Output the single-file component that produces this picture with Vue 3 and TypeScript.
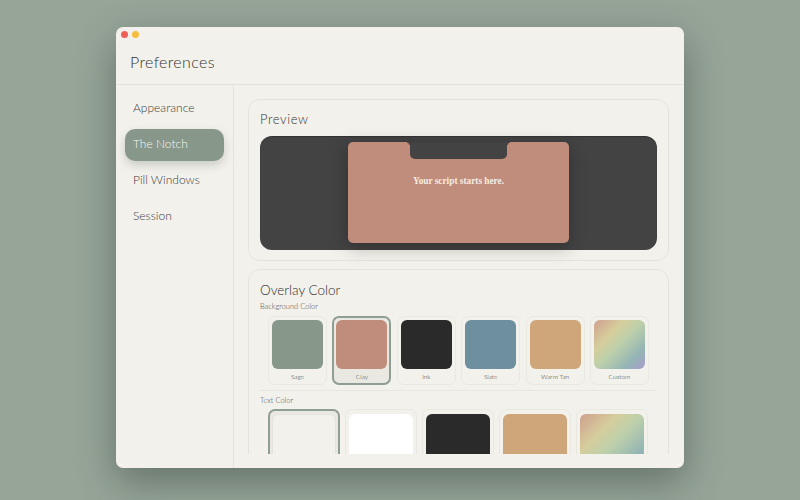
<script setup lang="ts">
interface Swatch {
  name: string;
  kind: string;
  selected?: boolean;
}

const navItems = ['Appearance', 'The Notch', 'Pill Windows', 'Session'];

const backgrounds: Swatch[] = [
  { name: 'Sage', kind: 'sage' },
  { name: 'Clay', kind: 'clay', selected: true },
  { name: 'Ink', kind: 'ink' },
  { name: 'Slate', kind: 'slate' },
  { name: 'Warm Tan', kind: 'tan' },
  { name: 'Custom', kind: 'custom' }
];

// names of this row sit below the fold
const textColors: Swatch[] = [
  { name: 'cream', kind: 'cream', selected: true },
  { name: 'white', kind: 'white' },
  { name: 'ink', kind: 'ink' },
  { name: 'tan', kind: 'tan' },
  { name: 'custom', kind: 'custom' }
];
</script>

<template>
  <div class="desktop">
    <div class="window">
      <div class="lights">
        <span class="light red"></span>
        <span class="light yellow"></span>
      </div>
      <header class="header">
        <h1>Preferences</h1>
      </header>
      <div class="body">
        <nav class="sidebar">
          <div
            v-for="item in navItems"
            :key="item"
            :class="['nav-item', { active: item === 'The Notch' }]"
          >
            {{ item }}
          </div>
        </nav>
        <main class="main">
          <div class="scroll">
            <section class="card preview-card">
              <h2 class="preview-title">Preview</h2>
              <div class="screen">
                <div class="overlay">
                  <div class="notch"></div>
                  <p class="script-text">Your script starts here.</p>
                </div>
              </div>
            </section>
            <section class="card">
              <h2 class="overlay-title">Overlay Color</h2>
              <div class="field-label">Background Color</div>
              <div class="swatches">
                <div
                  v-for="s in backgrounds"
                  :key="s.name"
                  :class="['swatch', { selected: s.selected }]"
                >
                  <div :class="['chip', s.kind]"></div>
                  <div class="swatch-name">{{ s.name }}</div>
                </div>
              </div>
              <div class="divider"></div>
              <div class="field-label">Text Color</div>
              <div class="swatches large">
                <div
                  v-for="s in textColors"
                  :key="s.name"
                  :class="['swatch', { selected: s.selected }]"
                >
                  <div :class="['chip', s.kind]"></div>
                </div>
              </div>
            </section>
          </div>
        </main>
      </div>
    </div>
  </div>
</template>

<style>
html,
body {
  margin: 0;
  background: #97a599;
}
</style>

<style scoped>
.desktop {
  width: 800px;
  height: 500px;
  box-sizing: border-box;
  padding: 27px 116px 32px;
  background: #97a599;
  overflow: hidden;
  font-family: Lato, sans-serif;
  color: #33332f;
}

.window {
  position: relative;
  height: 100%;
  display: flex;
  flex-direction: column;
  background: #f3f1ec;
  border-radius: 7px;
  box-shadow: 0 14px 38px rgba(40, 55, 45, 0.45);
  overflow: hidden;
}

.lights {
  position: absolute;
  top: 4px;
  left: 5px;
  display: flex;
  gap: 4px;
}

.light {
  width: 7px;
  height: 7px;
  border-radius: 50%;
}

.red {
  background: #ee5f57;
}

.yellow {
  background: #f6bd3f;
}

.header {
  height: 58px;
  flex: none;
  box-sizing: border-box;
  padding: 25px 14px 0;
  border-bottom: 1px solid #e4e2dc;
}

h1 {
  margin: 0;
  font-size: 16px;
  line-height: 20px;
  font-weight: 300;
  letter-spacing: 0.35px;
}

.body {
  flex: 1;
  min-height: 0;
  display: flex;
}

.sidebar {
  width: 118px;
  flex: none;
  box-sizing: border-box;
  padding: 8px 9px;
  display: flex;
  flex-direction: column;
  gap: 4px;
  border-right: 1px solid #e4e2dc;
}

.nav-item {
  height: 32px;
  box-sizing: border-box;
  padding: 0 0 3px 8px;
  display: flex;
  align-items: center;
  font-size: 12px;
  font-weight: 300;
  color: #3c3c38;
  border-radius: 10px;
}

.nav-item.active {
  background: #87988b;
  color: #f7f5f0;
  box-shadow: 0 4px 10px rgba(90, 105, 95, 0.28);
}

.main {
  flex: 1;
  min-width: 0;
  display: flex;
  padding: 14px 15px 14px 14px;
}

.scroll {
  flex: 1;
  min-width: 0;
  overflow: hidden;
  display: flex;
  flex-direction: column;
  gap: 8px;
}

.card {
  flex: none;
  padding: 11px 11px 10px;
  border: 1px solid #e5e4dc;
  border-radius: 12px;
}

.preview-card {
  height: 162px;
  box-sizing: border-box;
}

.preview-title {
  margin: -1px 0 8px;
  font-size: 13px;
  line-height: 18px;
  font-weight: 300;
  letter-spacing: 0.6px;
}

.screen {
  height: 114px;
  padding-top: 6px;
  box-sizing: border-box;
  display: flex;
  justify-content: center;
  background: #434343;
  border-radius: 12px;
  box-shadow: inset 0 1px 1px rgba(0, 0, 0, 0.25);
}

.overlay {
  position: relative;
  width: 221px;
  height: 101px;
  background: #c08c7b;
  border-radius: 5px;
  box-shadow: 0 4px 18px rgba(0, 0, 0, 0.28);
  text-align: center;
}

.notch {
  position: absolute;
  top: 0;
  left: 62px;
  width: 97px;
  height: 17px;
  background: #434343;
  border-radius: 0 0 5px 5px;
}

.notch::before,
.notch::after {
  content: '';
  position: absolute;
  top: 0;
  width: 5px;
  height: 5px;
}

.notch::before {
  left: -5px;
  background: radial-gradient(circle at 0 100%, #c08c7b 4.8px, #434343 5.2px);
}

.notch::after {
  right: -5px;
  background: radial-gradient(circle at 100% 100%, #c08c7b 4.8px, #434343 5.2px);
}

.script-text {
  margin: 0;
  padding-top: 32px;
  font-family: 'Liberation Serif', serif;
  font-size: 9.3px;
  line-height: 14px;
  font-weight: 700;
  color: #f6ede2;
}

.overlay-title {
  margin: 0 0 2px;
  font-size: 13.5px;
  line-height: 18px;
  font-weight: 300;
  color: #2b2b28;
}

.field-label {
  font-size: 7.5px;
  line-height: 11px;
  font-weight: 300;
  color: #4d4d47;
}

.swatches {
  display: flex;
  gap: 5.4px;
  padding: 4px 8px 0;
}

.swatch {
  width: 59px;
  height: 69px;
  flex: none;
  box-sizing: border-box;
  padding: 3px 3px 0;
  border: 1px solid #e9e8e1;
  border-radius: 7px;
}

.swatch.selected {
  border: 2px solid #8f9d92;
  padding: 2px 2px 0;
  background: #e9e9e2;
}

.chip {
  height: 49px;
  border-radius: 6px;
}

.swatch-name {
  margin-top: 2px;
  font-size: 6.5px;
  line-height: 11px;
  font-weight: 300;
  text-align: center;
  color: #3c3c38;
}

.large {
  gap: 5px;
  padding-top: 3px;
}

.large .swatch {
  width: 72px;
  height: 80px;
  padding-top: 4px;
}

.large .swatch.selected {
  padding-top: 3px;
}

.large .chip {
  height: 62px;
}

.divider {
  height: 1px;
  margin: 5px 0 4px;
  background: #e8e6e0;
}

.sage {
  background: #87988b;
}

.clay {
  background: #c08c7b;
}

.ink {
  background: #2a2a2a;
}

.slate {
  background: #6e8f9e;
}

.tan {
  background: #cfa67a;
}

.cream {
  background: #f3f1ec;
  border: 1px solid #e4e3dc;
  box-sizing: border-box;
}

.white {
  background: #fff;
}

.custom {
  background: linear-gradient(135deg, #cf9f8e 0%, #d6cd9c 30%, #bdd0aa 50%, #94b5b5 78%, #a99ccb 100%);
}
</style>
